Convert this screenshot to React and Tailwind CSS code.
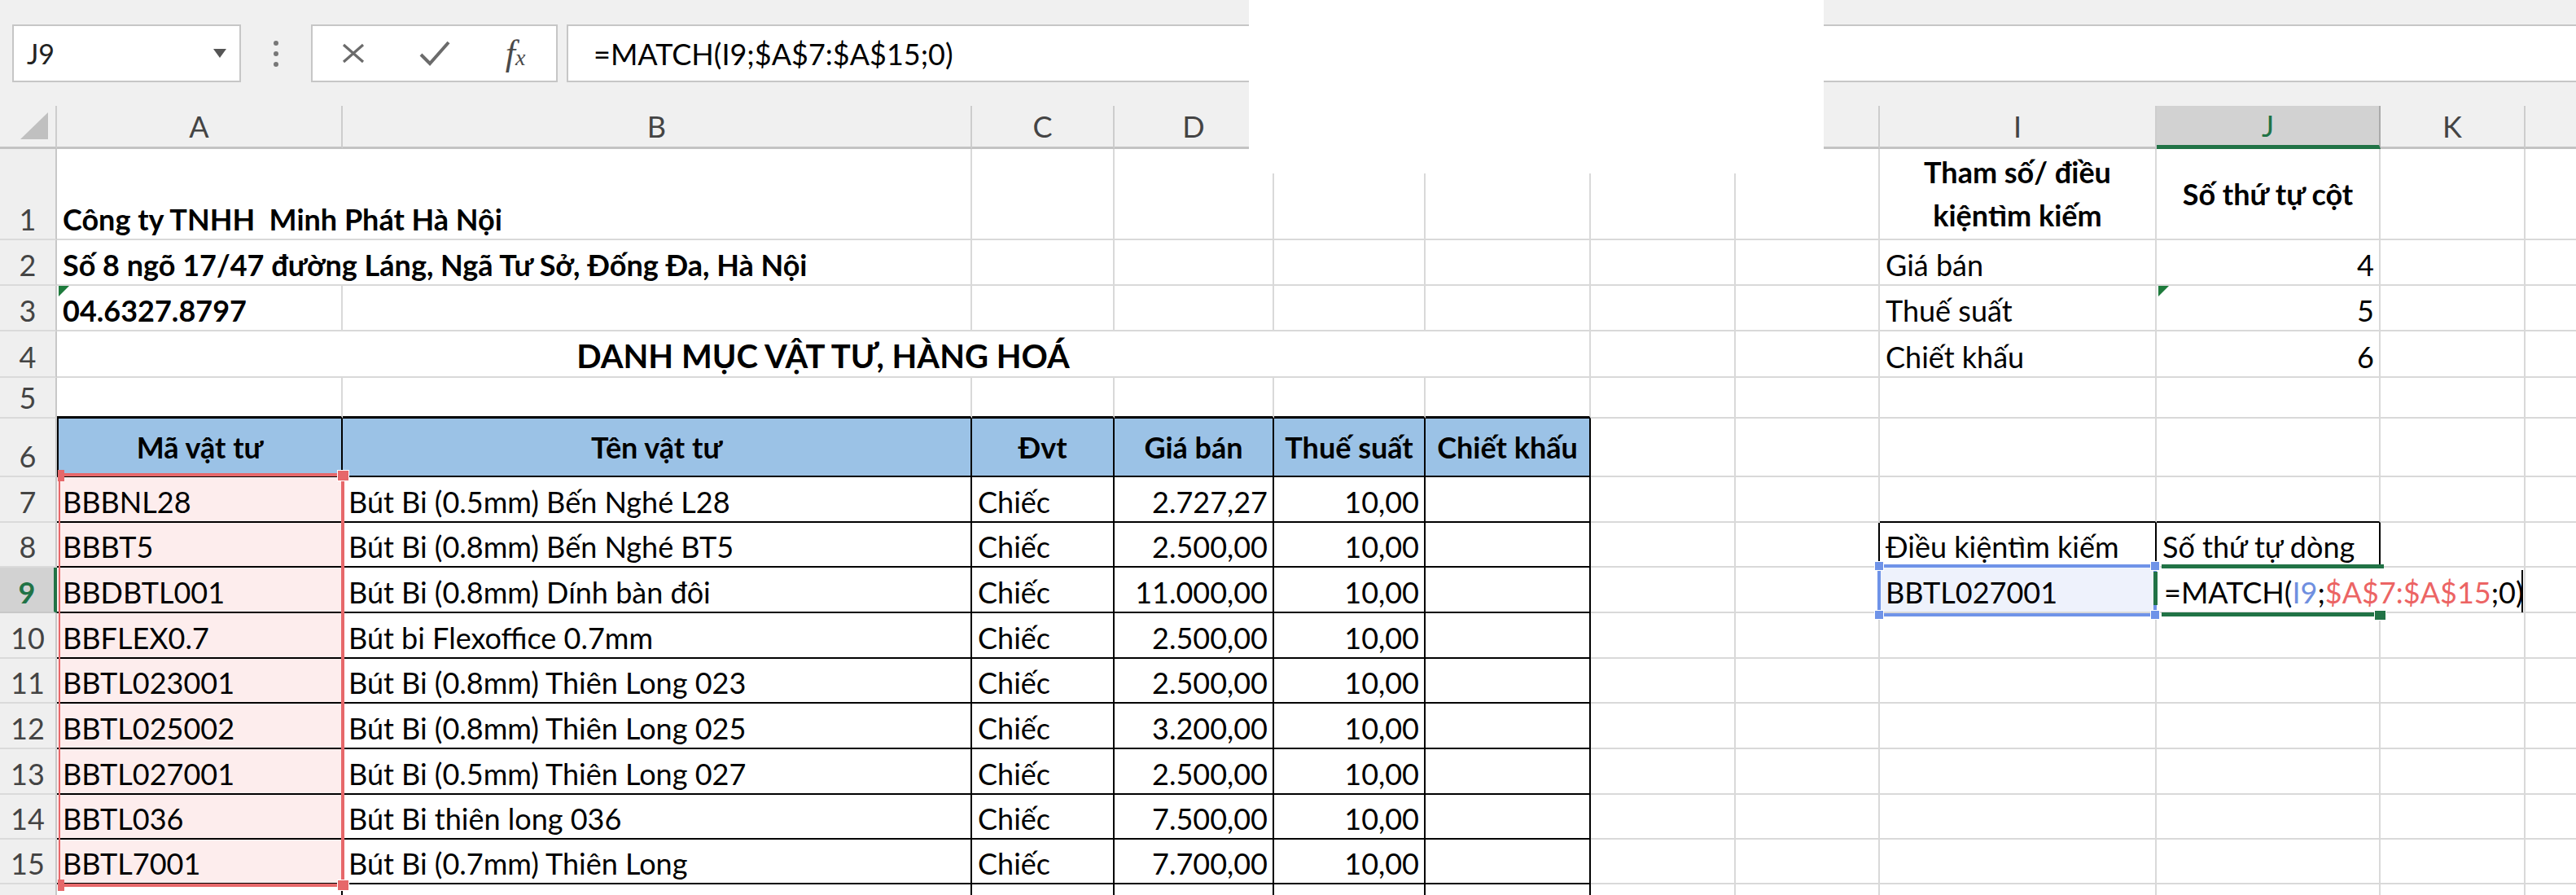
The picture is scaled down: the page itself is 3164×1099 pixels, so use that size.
import React from "react";

const W = {
  RH: "w-[70px]",
  A: "w-[351px]",
  B: "w-[773px]",
  C: "w-[175px]",
  D: "w-[196px]",
  E: "w-[186px]",
  F: "w-[203px]",
  G: "w-[178px]",
  H: "w-[177px]",
  I: "w-[340px]",
  J: "w-[275px]",
  K: "w-[178px]",
  L: "w-[178px]",
};

const RB = {
  g: "border-r-2 border-r-[#d9d9d9]",
  k: "border-r-2 border-r-black",
  n: "",
};
const BB = {
  g: "border-b-2 border-b-[#d9d9d9]",
  k: "border-b-2 border-b-black",
  k3: "border-b-[3px] border-b-black",
  n: "",
};

const T = "items-end pl-[7px] pb-[6px] whitespace-nowrap";
const TR = "items-end justify-end pr-[6px] pb-[6px] whitespace-nowrap";
const TC = "items-center justify-center whitespace-nowrap text-center";

function Cell({ w, r = "g", b = "g", className = "", children }) {
  return (
    <div className={`relative shrink-0 flex ${w} ${RB[r]} ${BB[b]} ${className}`}>
      {children}
    </div>
  );
}

function RowHead({ n, hl }) {
  if (hl) {
    return (
      <div className="w-[70px] shrink-0 flex items-end justify-center pb-[6px] bg-[#d2d2d2] border-r-[4px] border-r-[#217346] border-b-2 border-b-[#c8c8c8] text-[#217346] font-bold">
        {n}
      </div>
    );
  }
  return (
    <div className="w-[70px] shrink-0 flex items-end justify-center pb-[6px] bg-[#efefef] border-r-2 border-r-[#c8c8c8] border-b-2 border-b-[#dadada] text-[#444]">
      {n}
    </div>
  );
}

function GreenTri() {
  return (
    <svg className="absolute left-[2px] top-0" width="13" height="13" viewBox="0 0 13 13">
      <path d="M0 0H13L0 13Z" fill="#1e7b3c" />
    </svg>
  );
}

function HeadCell({ w, label, sel }) {
  if (sel) {
    return (
      <div className={`shrink-0 flex items-center justify-center ${w} bg-[#d2d2d2] border-r-2 border-r-[#ababab] border-b-[5px] border-b-[#217346] text-[#217346]`}>
        {label}
      </div>
    );
  }
  return (
    <div className={`shrink-0 flex items-center justify-center ${w} border-r-2 border-r-[#cdcdcd] border-b-[3px] border-b-[#c3c3c3] text-[#444]`}>
      {label}
    </div>
  );
}

function TopArea() {
  return (
    <div className="flex h-[183px]">
      {/* left screenshot strip */}
      <div className="w-[1534px] shrink-0 overflow-hidden bg-[#f0f0f0] flex flex-col">
        <div className="h-[30px] shrink-0" />
        <div className="h-[71px] shrink-0 flex">
          <div className="ml-[15px] w-[281px] shrink-0 bg-white border-2 border-[#c6c6c6] flex items-center pl-[16px] pr-[16px]">
            <span className="text-[34px] text-[#222]">J9</span>
            <svg className="ml-auto" width="16" height="11" viewBox="0 0 16 11">
              <path d="M0 0H16L8 11Z" fill="#555" />
            </svg>
          </div>
          <div className="w-[86px] shrink-0 flex items-center justify-center">
            <svg width="8" height="34" viewBox="0 0 8 34">
              <circle cx="4" cy="4" r="3" fill="#777" />
              <circle cx="4" cy="17" r="3" fill="#777" />
              <circle cx="4" cy="30" r="3" fill="#777" />
            </svg>
          </div>
          <div className="w-[303px] shrink-0 bg-white border-2 border-[#c6c6c6] flex items-center">
            <div className="w-[100px] flex justify-center">
              <svg width="30" height="27" viewBox="0 0 30 27">
                <path d="M3 3L27 24M27 3L3 24" stroke="#6b6b6b" strokeWidth="3.2" fill="none" />
              </svg>
            </div>
            <div className="w-[100px] flex justify-center">
              <svg width="38" height="31" viewBox="0 0 38 31">
                <path d="M2 17L13 28L36 2" stroke="#6b6b6b" strokeWidth="4" fill="none" />
              </svg>
            </div>
            <div className="w-[100px] flex justify-center">
              <span className="font-['Liberation_Serif',serif] italic text-[44px] leading-none text-[#4a4a4a]">
                f<span className="text-[28px]">x</span>
              </span>
            </div>
          </div>
          <div className="ml-[11px] flex-1 bg-white border-y-2 border-l-2 border-[#c6c6c6] flex items-center pl-[31px] whitespace-nowrap">
            =MATCH(I9;$A$7:$A$15;0)
          </div>
        </div>
        <div className="h-[29px] shrink-0" />
        <div className="h-[53px] shrink-0 flex">
          <div className="w-[70px] shrink-0 flex items-end justify-end pr-[9px] pb-[9px] border-r-2 border-r-[#cdcdcd] border-b-[3px] border-b-[#c3c3c3]">
            <svg width="34" height="33" viewBox="0 0 34 33">
              <path d="M34 0V33H0Z" fill="#c0c0c0" />
            </svg>
          </div>
          <HeadCell w={W.A} label="A" />
          <HeadCell w={W.B} label="B" />
          <HeadCell w={W.C} label="C" />
          <HeadCell w={W.D} label="D" />
        </div>
      </div>
      {/* gap */}
      <div className="w-[706px] shrink-0 bg-white" />
      {/* right screenshot strip */}
      <div className="flex-1 overflow-hidden bg-[#f0f0f0] flex flex-col">
        <div className="h-[30px] shrink-0" />
        <div className="h-[71px] shrink-0 bg-white border-y-2 border-[#c6c6c6]" />
        <div className="h-[29px] shrink-0" />
        <div className="h-[53px] shrink-0 flex">
          <div className="w-[69px] shrink-0 border-r-2 border-r-[#cdcdcd] border-b-[3px] border-b-[#c3c3c3]" />
          <HeadCell w={W.I} label="I" />
          <HeadCell w={W.J} label="J" sel />
          <HeadCell w={W.K} label="K" />
          <HeadCell w={W.L} label="" />
        </div>
      </div>
    </div>
  );
}

function GapTopCell({ w }) {
  return (
    <div className={`shrink-0 flex flex-col ${w} border-b-2 border-b-[#d9d9d9]`}>
      <div className="h-[30px] shrink-0" />
      <div className="flex-1 border-r-2 border-r-[#d9d9d9]" />
    </div>
  );
}

const data = [
  ["BBBNL28", "Bút Bi (0.5mm) Bến Nghé L28", "2.727,27", "h-[56px]"],
  ["BBBT5", "Bút Bi (0.8mm) Bến Nghé BT5", "2.500,00", "h-[55px]"],
  ["BBDBTL001", "Bút Bi (0.8mm) Dính bàn đôi", "11.000,00", "h-[56px]"],
  ["BBFLEX0.7", "Bút bi Flexoffice 0.7mm", "2.500,00", "h-[56px]"],
  ["BBTL023001", "Bút Bi (0.8mm) Thiên Long 023", "2.500,00", "h-[55px]"],
  ["BBTL025002", "Bút Bi (0.8mm) Thiên Long 025", "3.200,00", "h-[56px]"],
  ["BBTL027001", "Bút Bi (0.5mm) Thiên Long 027", "2.500,00", "h-[56px]"],
  ["BBTL036", "Bút Bi thiên long 036", "7.500,00", "h-[55px]"],
  ["BBTL7001", "Bút Bi (0.7mm) Thiên Long", "7.700,00", "h-[55px]"],
];

function RightSide({ row }) {
  if (row === 7) {
    return (
      <>
        <Cell w={W.G} />
        <Cell w={W.H} />
        <Cell w={W.I} b="k" />
        <Cell w={W.J} b="k" />
        <Cell w={W.K} />
        <Cell w={W.L} />
      </>
    );
  }
  if (row === 8) {
    return (
      <>
        <Cell w={W.G} />
        <Cell w={W.H} r="k" />
        <Cell w={W.I} r="k" className={T}>Điều kiệntìm kiếm</Cell>
        <Cell w={W.J} r="k" className={T}>Số thứ tự dòng</Cell>
        <Cell w={W.K} />
        <Cell w={W.L} />
      </>
    );
  }
  if (row === 9) {
    return (
      <>
        <Cell w={W.G} />
        <Cell w={W.H} />
        <Cell w={W.I} className={`${T} bg-[#eef2fc]`}>BBTL027001</Cell>
        <Cell w={W.J} r="n" className="items-end pl-[9px] pb-[6px] whitespace-nowrap">
          <span>
            =MATCH(<span className="text-[#6f8fe0]">I9</span>;<span className="text-[#ec6464]">$A$7:$A$15</span>;0)
          </span>
        </Cell>
        <Cell w={W.K} />
        <Cell w={W.L} />
      </>
    );
  }
  return (
    <>
      <Cell w={W.G} />
      <Cell w={W.H} />
      <Cell w={W.I} />
      <Cell w={W.J} />
      <Cell w={W.K} />
      <Cell w={W.L} />
    </>
  );
}

function Body() {
  return (
    <div className="relative">
      {/* Row 1 */}
      <div className="flex h-[112px]">
        <RowHead n="1" />
        <Cell w={W.A} r="n" className={`${T} font-bold whitespace-pre`}>Công ty TNHH  Minh Phát Hà Nội</Cell>
        <Cell w={W.B} />
        <Cell w={W.C} />
        <GapTopCell w={W.D} />
        <GapTopCell w={W.E} />
        <GapTopCell w={W.F} />
        <GapTopCell w={W.G} />
        <Cell w={W.H} />
        <Cell w={W.I} className={`${TC} font-bold leading-[53px]`}>
          <div>
            Tham số/ điều
            <br />
            kiệntìm kiếm
          </div>
        </Cell>
        <Cell w={W.J} className={`${TC} font-bold`}>Số thứ tự cột</Cell>
        <Cell w={W.K} />
        <Cell w={W.L} />
      </div>
      {/* Row 2 */}
      <div className="flex h-[56px]">
        <RowHead n="2" />
        <Cell w={W.A} r="n" className={`${T} font-bold`}>Số 8 ngõ 17/47 đường Láng, Ngã Tư Sở, Đống Đa, Hà Nội</Cell>
        <Cell w={W.B} />
        <Cell w={W.C} />
        <Cell w={W.D} />
        <Cell w={W.E} />
        <Cell w={W.F} />
        <Cell w={W.G} />
        <Cell w={W.H} />
        <Cell w={W.I} className={T}>Giá bán</Cell>
        <Cell w={W.J} className={TR}>4</Cell>
        <Cell w={W.K} />
        <Cell w={W.L} />
      </div>
      {/* Row 3 */}
      <div className="flex h-[56px]">
        <RowHead n="3" />
        <Cell w={W.A} className={`${T} font-bold`}>
          <GreenTri />
          04.6327.8797
        </Cell>
        <Cell w={W.B} />
        <Cell w={W.C} />
        <Cell w={W.D} />
        <Cell w={W.E} />
        <Cell w={W.F} />
        <Cell w={W.G} />
        <Cell w={W.H} />
        <Cell w={W.I} className={T}>Thuế suất</Cell>
        <Cell w={W.J} className={TR}>
          <GreenTri />5
        </Cell>
        <Cell w={W.K} />
        <Cell w={W.L} />
      </div>
      {/* Row 4 */}
      <div className="flex h-[57px]">
        <RowHead n="4" />
        <Cell w="w-[1884px]" className="items-end justify-center pb-[5px] font-bold text-[40px] whitespace-nowrap">
          DANH MỤC VẬT TƯ, HÀNG HOÁ
        </Cell>
        <Cell w={W.G} />
        <Cell w={W.H} />
        <Cell w={W.I} className={T}>Chiết khấu</Cell>
        <Cell w={W.J} className={TR}>6</Cell>
        <Cell w={W.K} />
        <Cell w={W.L} />
      </div>
      {/* Row 5 */}
      <div className="flex h-[50px]">
        <RowHead n="5" />
        <Cell w={W.A} b="k3" />
        <Cell w={W.B} b="k3" />
        <Cell w={W.C} b="k3" />
        <Cell w={W.D} b="k3" />
        <Cell w={W.E} b="k3" />
        <Cell w={W.F} b="k3" />
        <Cell w={W.G} />
        <Cell w={W.H} />
        <Cell w={W.I} />
        <Cell w={W.J} />
        <Cell w={W.K} />
        <Cell w={W.L} />
      </div>
      {/* Row 6 */}
      <div className="flex h-[72px]">
        <RowHead n="6" />
        <Cell w={W.A} r="k" b="k" className={`${TC} font-bold bg-[#9bc2e6] border-l-2 border-l-black`}>Mã vật tư</Cell>
        <Cell w={W.B} r="k" b="k" className={`${TC} font-bold bg-[#9bc2e6]`}>Tên vật tư</Cell>
        <Cell w={W.C} r="k" b="k" className={`${TC} font-bold bg-[#9bc2e6]`}>Đvt</Cell>
        <Cell w={W.D} r="k" b="k" className={`${TC} font-bold bg-[#9bc2e6]`}>Giá bán</Cell>
        <Cell w={W.E} r="k" b="k" className={`${TC} font-bold bg-[#9bc2e6]`}>Thuế suất</Cell>
        <Cell w={W.F} r="k" b="k" className={`${TC} font-bold bg-[#9bc2e6]`}>Chiết khấu</Cell>
        <RightSide row={6} />
      </div>
      {/* Rows 7-15 */}
      {data.map((d, i) => {
        const row = i + 7;
        return (
          <div key={row} className={`flex ${d[3]}`}>
            <RowHead n={String(row)} hl={row === 9} />
            <Cell w={W.A} r="k" b="k" className={`${T} bg-[#fdeded]`}>{d[0]}</Cell>
            <Cell w={W.B} r="k" b="k" className={T}>{d[1]}</Cell>
            <Cell w={W.C} r="k" b="k" className={T}>Chiếc</Cell>
            <Cell w={W.D} r="k" b="k" className={TR}>{d[2]}</Cell>
            <Cell w={W.E} r="k" b="k" className={TR}>10,00</Cell>
            <Cell w={W.F} r="k" b="k" />
            <RightSide row={row} />
          </div>
        );
      })}
      {/* Row 16 (only its top edge is visible) */}
      <div className="flex h-[56px]">
        <RowHead n="" />
        <Cell w={W.A} r="k" />
        <Cell w={W.B} r="k" />
        <Cell w={W.C} r="k" />
        <Cell w={W.D} r="k" />
        <Cell w={W.E} r="k" />
        <Cell w={W.F} r="k" />
        <RightSide row={16} />
      </div>

      {/* Red reference range A7:A15 */}
      <div className="absolute left-[72px] top-[398px] w-[351px] h-[508px] border-[4px] border-l-2 border-[#e6686a]" />
      <div className="absolute left-[71px] top-[394px] w-[8px] h-[14px] bg-[#e6686a]" />
      <div className="absolute left-[414px] top-[394px] w-[15px] h-[14px] bg-[#e6686a] border border-white" />
      <div className="absolute left-[71px] top-[897px] w-[8px] h-[14px] bg-[#e6686a]" />
      <div className="absolute left-[414px] top-[897px] w-[15px] h-[14px] bg-[#e6686a] border border-white" />

      {/* Blue reference I9 */}
      <div className="absolute left-[2306px] top-[510px] w-[343px] h-[64px] border-[4px] border-[#6f93e8]" />
      <div className="absolute left-[2302px] top-[506px] w-[12px] h-[12px] bg-[#6f93e8] border border-white" />
      <div className="absolute left-[2641px] top-[506px] w-[12px] h-[12px] bg-[#6f93e8] border border-white" />
      <div className="absolute left-[2302px] top-[566px] w-[12px] h-[12px] bg-[#6f93e8] border border-white" />
      <div className="absolute left-[2641px] top-[566px] w-[12px] h-[12px] bg-[#6f93e8] border border-white" />

      {/* Green active cell J9 */}
      <div className="absolute left-[2655px] top-[510px] w-[273px] h-[5px] bg-[#217346]" />
      <div className="absolute left-[2655px] top-[569px] w-[261px] h-[5px] bg-[#217346]" />
      <div className="absolute left-[2645px] top-[519px] w-[5px] h-[41px] bg-[#217346]" />
      <div className="absolute left-[2916px] top-[566px] w-[15px] h-[13px] bg-[#217346] border border-white" />
      {/* text cursor */}
      <div className="absolute left-[3097px] top-[517px] w-[2px] h-[52px] bg-black" />
    </div>
  );
}

export default function App() {
  return (
    <div className="w-[3164px] h-[1099px] overflow-hidden bg-white font-['Lato',sans-serif] text-[36px] leading-none text-black">
      <TopArea />
      <Body />
    </div>
  );
}
